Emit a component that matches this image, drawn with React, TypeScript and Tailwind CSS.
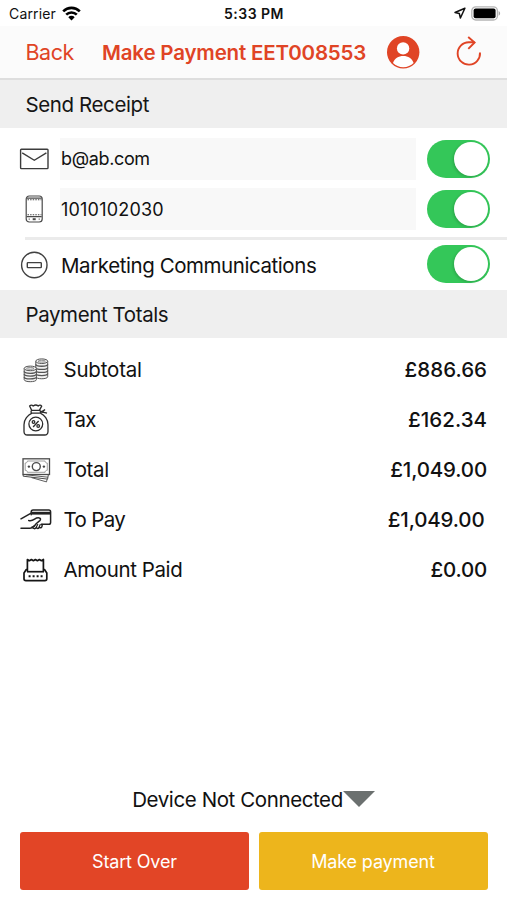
import React, { useState } from "react";

interface ToggleProps {
  on: boolean;
  onToggle: () => void;
  label: string;
}

function Toggle({ on, onToggle, label }: ToggleProps) {
  return (
    <button
      role="switch"
      aria-checked={on}
      aria-label={label}
      onClick={onToggle}
      className={`flex h-[38px] w-[63px] shrink-0 items-center rounded-full px-0.5 ${
        on ? "justify-end bg-[#34c759]" : "justify-start bg-[#e9e9ea]"
      }`}
    >
      <span className="size-[34px] rounded-full bg-white shadow-[-1px_1px_3px_rgba(0,0,0,0.18)]" />
    </button>
  );
}

function SectionHeader({ title }: { title: string }) {
  return (
    <h2 className="flex h-12 items-center bg-[#efefef] pt-0.5 pl-[25.5px] text-[20.5px] tracking-[-0.4px] text-[#151515]">
      {title}
    </h2>
  );
}

/* Icons */

function WifiIcon() {
  return (
    <svg width="19" height="15" viewBox="0 0 19 15" fill="none" stroke="#000" strokeWidth="2.6">
      <path d="M1.2 5.3a11.8 11.8 0 0 1 16.6 0" />
      <path d="M4.2 8.7a7.5 7.5 0 0 1 10.6 0" />
      <path d="M9.5 14.4l-3.2-3.2a4.5 4.5 0 0 1 6.4 0z" fill="#000" stroke="none" />
    </svg>
  );
}

function LocationIcon() {
  return (
    <svg width="12" height="12" viewBox="0 0 12 12" fill="none" stroke="#111" strokeWidth="1.5" strokeLinejoin="round">
      <path d="M10.9 1.2L1 5.5l4.3 1 1.1 4.5z" />
    </svg>
  );
}

function BatteryIcon() {
  return (
    <svg width="30" height="15" viewBox="0 0 30 15">
      <rect x="0.8" y="0.8" width="25.6" height="13.2" rx="4" fill="#fff" stroke="#b5b5b5" strokeWidth="1.3" />
      <rect x="2.6" y="2.6" width="22" height="9.6" rx="2" fill="#000" />
      <path d="M27.6 5.1c2 .8 2 3.9 0 4.7z" fill="#a6a6a6" />
    </svg>
  );
}

function UserIcon() {
  return (
    <svg width="33" height="33" viewBox="0 0 33 33">
      <circle cx="16.2" cy="16.2" r="16.2" fill="#e04425" />
      <circle cx="16.1" cy="12.4" r="6.2" fill="#fff" />
      <path d="M6 27.1c1.4-4.7 5.500-7.1 10.300-7.1s8.900 2.400 10.300 7.100c-2.600 2.700-6.200 4.200-10.300 4.200s-7.700-1.500-10.300-4.200z" fill="#fff" />
    </svg>
  );
}

function ReloadIcon() {
  return (
    <svg width="26" height="30" viewBox="0 0 26 30" fill="none" stroke="#e04425" strokeWidth="1.9">
      <path d="M24 16.5A11.2 11.2 0 1 1 12.8 6.2H18.5" />
      <path d="M12.2 1l6.400 5.500-6.300 6.300" />
    </svg>
  );
}

function MailIcon() {
  return (
    <svg width="30" height="22" viewBox="0 0 30 22" fill="none" stroke="#3c3c3c" strokeWidth="1.4">
      <rect x="1.6" y="1.2" width="27.4" height="19.4" rx="0.8" />
      <path d="M3.2 4.8L15.3 12.3 27.4 4.8" />
    </svg>
  );
}

function PhoneIcon() {
  return (
    <svg width="18" height="28" viewBox="0 0 18 28" fill="none" stroke="#4a4a4a" strokeWidth="1.2">
      <rect x="1.2" y="1" width="16" height="26" rx="3" />
      <path d="M1.7 3.2h15M1.7 21.7h15" />
      <path d="M2.5 4.8h14M2.5 19.7h14" strokeDasharray="1.5 1.1" strokeWidth="1.1" />
      <path d="M7.7 24.2h3" strokeWidth="2" />
      <path d="M3.7 24.2h1M13.7 24.2h1" />
    </svg>
  );
}

function MinusIcon() {
  return (
    <svg width="28" height="28" viewBox="0 0 28 28" fill="none" stroke="#414141" strokeWidth="1.4">
      <circle cx="14.3" cy="14" r="12.7" />
      <rect x="7.3" y="11.6" width="14" height="5" rx="0.7" />
    </svg>
  );
}

function CoinsIcon() {
  return (
    <svg width="26" height="25" viewBox="0 0 26 25" fill="#f2f2f2" stroke="#555" strokeWidth="1">
      <path d="M12.8 3.2v15.6c0 2.6 11.9 2.6 11.9 0V3.2" />
      <path d="M12.8 6.3c0 2.6 11.9 2.6 11.9 0M12.8 9.4c0 2.6 11.9 2.6 11.9 0M12.8 12.5c0 2.6 11.9 2.6 11.9 0M12.8 15.6c0 2.6 11.9 2.6 11.9 0" fill="none" strokeWidth="1.3" />
      <ellipse cx="18.75" cy="3.2" rx="6" ry="2.3" />
      <ellipse cx="18.75" cy="3.2" rx="3.6" ry="0.9" strokeWidth="0.6" />
      <path d="M1.2 10.4v11.2c0 2.8 12.2 2.8 12.2 0V10.4" />
      <path d="M1.2 13.3c0 2.7 12.2 2.7 12.2 0M1.2 16.1c0 2.7 12.2 2.7 12.2 0M1.2 18.9c0 2.7 12.2 2.7 12.2 0" fill="none" strokeWidth="1.3" />
      <ellipse cx="7.3" cy="10.4" rx="6.1" ry="2.3" />
      <ellipse cx="7.3" cy="10.4" rx="3.7" ry="0.9" strokeWidth="0.6" />
    </svg>
  );
}

function MoneyBagIcon() {
  return (
    <svg width="26" height="32" viewBox="0 0 26 32" fill="none" stroke="#2c2c2c" strokeWidth="1.3" strokeLinejoin="round">
      <path d="M9 9.2C4.8 11 1 15.6 1 20.7v6.8C1 30 2.3 31 4.5 31h17c2.2 0 3.5-1 3.500-3.500v-6.800c0-5.100-3.500-9.700-7.700-11.500" />
      <path d="M8.7 6.4L6.6 2c1.2-1.200 2.500-1.200 3.600 0 1.700-1.300 3.500-1.300 5 0 1.200-1.200 2.600-1 3.500.1l-2.300 4.300" />
      <rect x="8" y="6.4" width="9.5" height="2.8" rx="1.3" />
      <path d="M17.5 7.5c2 .2 3.300-.6 4.500-2M17.500 8.100c2.200 0 4.300.3 6.500 1" />
      <circle cx="12.8" cy="20" r="6.9" />
      <path d="M15.6 17l-5.500 6" />
      <circle cx="10.5" cy="18" r="1.3" />
      <circle cx="15.2" cy="22" r="1.3" />
    </svg>
  );
}

function BanknotesIcon() {
  return (
    <svg width="29" height="26" viewBox="0 0 29 26" fill="none" stroke="#4b4b4b" strokeWidth="1">
      <rect x="1" y="1.8" width="26.5" height="15.7" strokeWidth="1.3" />
      <path d="M3.2 6c1.4 0 2.200-.7 2.200-2h17.700c0 1.300.8 2 2.200 2v7.300c-1.400 0-2.200.7-2.200 2H5.400c0-1.300-.8-2-2.200-2z" stroke="#888" strokeWidth="0.8" />
      <circle cx="14.3" cy="9.6" r="4" strokeWidth="1.4" />
      <circle cx="6.9" cy="9.6" r="1.2" fill="#444" stroke="none" />
      <circle cx="21.9" cy="9.6" r="1.2" fill="#444" stroke="none" />
      <path d="M1.2 17.5v1.700l24.400 2.900.8-4.600" />
      <path d="M9.5 20.6l15 4.300.7-3M4 17.800l22 2.400" strokeWidth="0.9" />
    </svg>
  );
}

function CardHandIcon() {
  return (
    <svg width="32" height="22" viewBox="0 0 32 22" fill="none" stroke="#222" strokeWidth="1.5" strokeLinejoin="round" strokeLinecap="round">
      <path d="M11.2 5.8V3c0-1.2.7-1.900 1.900-1.900h15.700c1.200 0 1.800.7 1.800 1.900v10.500c0 1.200-.6 1.800-1.800 1.800h-7.500" />
      <path d="M11.8 4.2h18.300" strokeWidth="2.8" strokeLinecap="butt" />
      <path d="M1 9.8l9.700-5.500M1 19.300h9c1.800 0 2.800-1 4.100-2.400" />
      <path d="M8.7 11.5c2.200.6 4-.1 5.900-1.400 1.500-1 3.200-1.400 4.600-1.200 1.500.3 1.700 1.700.6 2.700l-3.400 2.900-2.500 2.900" />
      <path d="M12.2 18c1.2 1.900 2.900 2.200 4 .6 1 1.200 2.400 1.200 3.200-.4 1 1 2.400.7 2.700-1.200v-1.400" />
      <path d="M16.2 18.2l1.500-2.700M19.300 17.700l.9-2.200" strokeWidth="1.2" />
    </svg>
  );
}

function ReceiptIcon() {
  return (
    <svg width="26" height="24" viewBox="0 0 26 24" fill="none" stroke="#151515" strokeWidth="1.7" strokeLinejoin="round">
      <path d="M4.4 13.5V1.5l2 1.2 2-1.2 2 1.2 2-1.2 2 1.2 2-1.2 2 1.2 2-1.2v12" />
      <path d="M4.4 11.5H3.3L1 15v5.700c0 1.200.7 1.900 1.900 1.900h19c1.200 0 1.900-.7 1.900-1.900V15l-2.300-3.500h-1.100" />
      <path d="M4 13.7h17" />
      <path d="M5.6 18.3h14" strokeDasharray="2 2" strokeWidth="2" />
    </svg>
  );
}

const totals = [
  { label: "Subtotal", amount: "£886.66", icon: <CoinsIcon />, labelStyle: "tracking-[-0.2px]", style: "pr-5 tracking-[0.02px]" },
  { label: "Tax", amount: "£162.34", icon: <MoneyBagIcon />, labelStyle: "tracking-[-0.8px]", style: "pr-5 tracking-[0.03px]" },
  { label: "Total", amount: "£1,049.00", icon: <BanknotesIcon />, labelStyle: "tracking-[-0.4px]", style: "pr-5 tracking-[-0.15px]" },
  { label: "To Pay", amount: "£1,049.00", icon: <CardHandIcon />, labelStyle: "tracking-[-0.65px]", style: "pr-[22.5px] tracking-[-0.15px]" },
  { label: "Amount Paid", amount: "£0.00", icon: <ReceiptIcon />, labelStyle: "tracking-[-0.4px]", style: "pr-5 tracking-[-0.2px]" },
];

export default function App() {
  const [email, setEmail] = useState("b@ab.com");
  const [phone, setPhone] = useState("1010102030");
  const [sendEmail, setSendEmail] = useState(true);
  const [sendText, setSendText] = useState(true);
  const [marketing, setMarketing] = useState(true);

  return (
    <div className="flex h-[900px] w-[507px] flex-col overflow-hidden bg-white font-['Inter',sans-serif] text-[#111]">
      {/* Status bar */}
      <div className="grid h-[26px] shrink-0 grid-cols-3 items-center text-[14px]">
        <div className="flex items-center gap-1.5 pl-[9px]">
          <span className="pt-px tracking-[0.15px]">Carrier</span>
          <WifiIcon />
        </div>
        <span className="pt-px pl-px text-center font-semibold tracking-[0.5px]">5:33 PM</span>
        <div className="flex items-center justify-end gap-[5px] pr-[6px]">
          <LocationIcon />
          <BatteryIcon />
        </div>
      </div>

      {/* Navigation bar */}
      <header className="flex h-[54px] shrink-0 items-center border-b-2 border-[#dedede] bg-[#fbfbfb] pl-[25.5px] text-[#e04425]">
        <button className="w-[76.5px] pt-px text-left text-[21.5px] tracking-[-0.5px]">Back</button>
        <h1 className="w-[284.5px] pt-0.5 text-[20.5px] font-semibold whitespace-nowrap tracking-[-0.17px]">
          Make Payment EET008553
        </h1>
        <button aria-label="Account">
          <UserIcon />
        </button>
        <button aria-label="Reload" className="mb-0.5 ml-9">
          <ReloadIcon />
        </button>
      </header>

      <SectionHeader title="Send Receipt" />
      <div className="flex h-[109px] shrink-0 flex-col gap-2 pt-[10px] pr-[17px] pl-[19px]">
        <div className="flex h-[42px] items-center">
          <div className="flex w-[30px] justify-center">
            <MailIcon />
          </div>
          <input
            value={email}
            onChange={(e) => setEmail(e.target.value)}
            aria-label="Email"
            className="ml-[11px] h-full w-[356px] bg-[#f8f8f8] pb-px pl-px text-[18px] tracking-[-0.35px] outline-none"
          />
          <div className="ml-auto">
            <Toggle on={sendEmail} onToggle={() => setSendEmail(!sendEmail)} label="Email receipt" />
          </div>
        </div>
        <div className="flex h-[42px] items-center">
          <div className="flex w-[30px] justify-center">
            <PhoneIcon />
          </div>
          <input
            value={phone}
            onChange={(e) => setPhone(e.target.value)}
            aria-label="Phone"
            className="ml-[11px] h-full w-[356px] bg-[#f8f8f8] pl-px text-[18px] tracking-[0.2px] outline-none"
          />
          <div className="ml-auto">
            <Toggle on={sendText} onToggle={() => setSendText(!sendText)} label="Text receipt" />
          </div>
        </div>
      </div>
      <div className="ml-[25px] h-[3px] shrink-0 bg-[#ebebeb]" />
      <div className="flex h-[50px] shrink-0 items-center pr-[17px] pl-[20px]">
        <MinusIcon />
        <span className="ml-[13px] pt-0.5 text-[20.5px] tracking-[-0.43px]">Marketing Communications</span>
        <div className="mb-0.5 ml-auto">
          <Toggle on={marketing} onToggle={() => setMarketing(!marketing)} label="Marketing communications" />
        </div>
      </div>

      <SectionHeader title="Payment Totals" />
      <div className="pt-[7px]">
        {totals.map((row) => (
          <div key={row.label} className="flex h-[50px] items-center pl-5 text-[20.5px]">
            <div className="flex w-8 justify-center">{row.icon}</div>
            <span className={`ml-[11.5px] pt-px ${row.labelStyle}`}>{row.label}</span>
            <span className={`ml-auto pt-px font-medium ${row.style}`}>{row.amount}</span>
          </div>
        ))}
      </div>

      {/* Reader status and actions */}
      <button className="mt-auto mb-4 flex h-8 shrink-0 items-center justify-center text-[20.5px] tracking-[-0.4px]">
        <span className="pt-px">Device Not Connected</span>
        <svg width="32" height="16" viewBox="0 0 32 16" className="mb-0.5">
          <path d="M0 0h32L16 16z" fill="#6b706f" />
        </svg>
      </button>
      <div className="mb-[10px] grid h-[58px] shrink-0 grid-cols-2 gap-[10px] pr-[19px] pl-5 text-[18px] tracking-[-0.15px] text-white">
        <button className="rounded-[3px] bg-[#e24526]">Start Over</button>
        <button className="rounded-[3px] bg-[#edb51c] pr-px">Make payment</button>
      </div>
    </div>
  );
}
